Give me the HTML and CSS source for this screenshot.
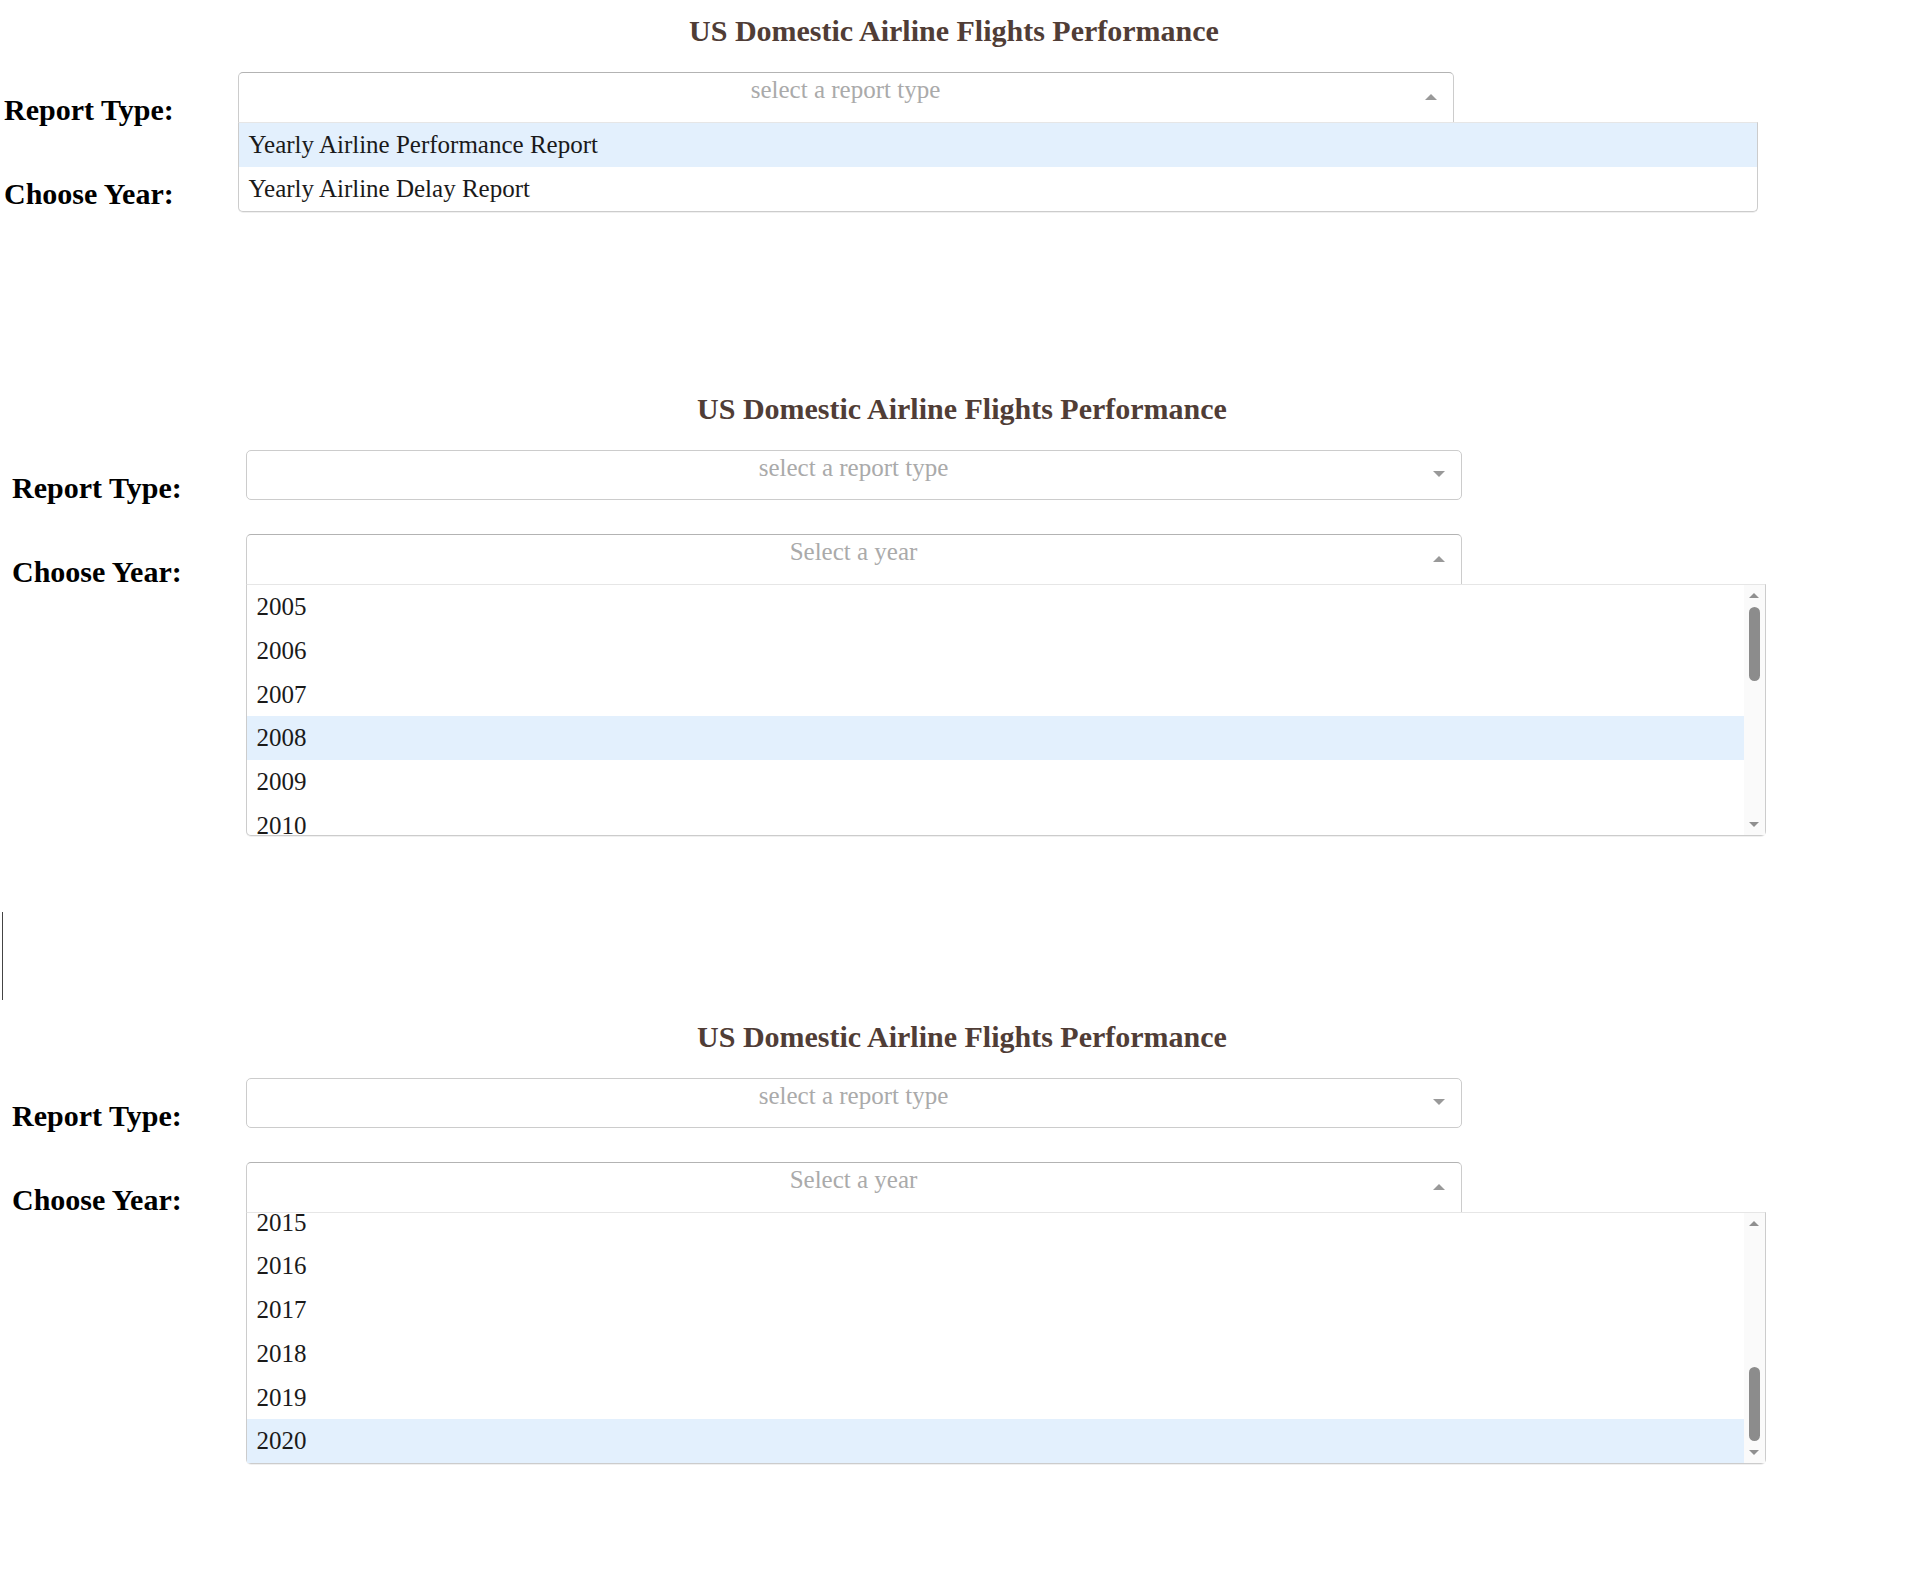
FILE: index.html
```html
<!DOCTYPE html>
<html lang="en">
<head>
<meta charset="utf-8">
<title>US Domestic Airline Flights Performance</title>
<link rel="stylesheet" href="styles.css">
</head>
<body>

<section class="panel panel-a">
  <h1 class="title">US Domestic Airline Flights Performance</h1>
  <div class="row">
    <h2 class="label">Report Type:</h2>
    <div class="dropdown">
      <div class="select">
        <div class="control open">
          <span class="placeholder">select a report type</span>
          <span class="arrow up"></span>
        </div>
        <div class="menu menu-report">
          <div class="options">
            <div class="option opt-report focused">Yearly Airline Performance Report</div>
            <div class="option opt-report">Yearly Airline Delay Report</div>
          </div>
        </div>
      </div>
    </div>
  </div>
  <div class="row">
    <h2 class="label">Choose Year:</h2>
    <div class="dropdown">
      <div class="select">
        <div class="control">
          <span class="placeholder">Select a year</span>
          <span class="arrow down"></span>
        </div>
      </div>
    </div>
  </div>
</section>

<section class="panel panel-b">
  <h1 class="title">US Domestic Airline Flights Performance</h1>
  <div class="row">
    <h2 class="label">Report Type:</h2>
    <div class="dropdown">
      <div class="select">
        <div class="control">
          <span class="placeholder">select a report type</span>
          <span class="arrow down"></span>
        </div>
      </div>
    </div>
  </div>
  <div class="row">
    <h2 class="label">Choose Year:</h2>
    <div class="dropdown">
      <div class="select">
        <div class="control open">
          <span class="placeholder">Select a year</span>
          <span class="arrow up"></span>
        </div>
        <div class="menu menu-years">
          <div class="options">
            <div class="option opt-year">2005</div>
            <div class="option opt-year">2006</div>
            <div class="option opt-year">2007</div>
            <div class="option opt-year focused">2008</div>
            <div class="option opt-year">2009</div>
            <div class="option opt-year">2010</div>
            <div class="option opt-year">2011</div>
            <div class="option opt-year">2012</div>
            <div class="option opt-year">2013</div>
            <div class="option opt-year">2014</div>
            <div class="option opt-year">2015</div>
            <div class="option opt-year">2016</div>
            <div class="option opt-year">2017</div>
            <div class="option opt-year">2018</div>
            <div class="option opt-year">2019</div>
            <div class="option opt-year">2020</div>
          </div>
          <div class="scrollbar">
            <div class="sb-btn"><span class="tri tri-up"></span></div>
            <div class="sb-track"><div class="sb-thumb"></div></div>
            <div class="sb-btn"><span class="tri tri-down"></span></div>
          </div>
        </div>
      </div>
    </div>
  </div>
</section>

<div class="caret"></div>

<section class="panel panel-c">
  <h1 class="title">US Domestic Airline Flights Performance</h1>
  <div class="row">
    <h2 class="label">Report Type:</h2>
    <div class="dropdown">
      <div class="select">
        <div class="control">
          <span class="placeholder">select a report type</span>
          <span class="arrow down"></span>
        </div>
      </div>
    </div>
  </div>
  <div class="row">
    <h2 class="label">Choose Year:</h2>
    <div class="dropdown">
      <div class="select">
        <div class="control open">
          <span class="placeholder">Select a year</span>
          <span class="arrow up"></span>
        </div>
        <div class="menu menu-years">
          <div class="options at-end">
            <div class="option opt-year">2005</div>
            <div class="option opt-year">2006</div>
            <div class="option opt-year">2007</div>
            <div class="option opt-year">2008</div>
            <div class="option opt-year">2009</div>
            <div class="option opt-year">2010</div>
            <div class="option opt-year">2011</div>
            <div class="option opt-year">2012</div>
            <div class="option opt-year">2013</div>
            <div class="option opt-year">2014</div>
            <div class="option opt-year">2015</div>
            <div class="option opt-year">2016</div>
            <div class="option opt-year">2017</div>
            <div class="option opt-year">2018</div>
            <div class="option opt-year">2019</div>
            <div class="option opt-year focused">2020</div>
          </div>
          <div class="scrollbar">
            <div class="sb-btn"><span class="tri tri-up"></span></div>
            <div class="sb-track at-end"><div class="sb-thumb"></div></div>
            <div class="sb-btn"><span class="tri tri-down"></span></div>
          </div>
        </div>
      </div>
    </div>
  </div>
</section>

</body>
</html>
```

FILE: styles.css
```css
html, body {
  margin: 0;
  padding: 0;
  background: #fff;
}

body {
  font-family: "Liberation Serif", "Times New Roman", serif;
  color: #000;
  width: 1922px;
  min-height: 1584px;
}

.panel {
  width: 1900px;
}

.panel-a {
  margin-left: 4px;
  padding-top: 14px;
}

.panel-b {
  margin-left: 12px;
  margin-top: 156px;
}

.panel-c {
  margin-left: 12px;
  margin-top: 20px;
}

.caret {
  margin: 298px 0 0 2px;
  width: 1px;
  height: 88px;
  background: #444;
}

.title {
  margin: 0 0 20px;
  font-size: 30px;
  line-height: 34px;
  font-weight: bold;
  text-align: center;
  color: #503D36;
}

.row {
  display: flex;
  align-items: flex-start;
}

.label {
  flex: 0 0 233.5px;
  margin: 25px 0;
  font-size: 30px;
  line-height: 34px;
  font-weight: bold;
  color: #000;
}

.dropdown {
  padding-top: 4px;
}

.select {
  position: relative;
  width: 1216px;
}

.control {
  box-sizing: border-box;
  height: 50px;
  border: 1px solid #ccc;
  border-radius: 5px;
  background: #fff;
  display: grid;
  grid-template-columns: 44px 1fr 44px;
  font-size: 25px;
}

.control.open {
  border-color: #b3b3b3 #ccc #ccc;
  border-bottom: 0;
  border-radius: 5px 5px 0 0;
}

.placeholder {
  grid-column: 2;
  align-self: start;
  text-align: center;
  line-height: 34px;
  color: #aaa;
  white-space: nowrap;
}

.arrow {
  grid-column: 3;
  justify-self: center;
  align-self: center;
  width: 0;
  height: 0;
  border-left: 6px solid transparent;
  border-right: 6px solid transparent;
}

.arrow.down {
  border-top: 6px solid #999;
  margin-bottom: 2px;
}

.arrow.up {
  border-bottom: 6px solid #999;
  margin-bottom: 2px;
}

.menu {
  position: absolute;
  top: 100%;
  left: 0;
  z-index: 2;
  width: 125%;
  box-sizing: border-box;
  display: flex;
  background: #fff;
  border: 1px solid #ccc;
  border-top-color: #e6e6e6;
  border-radius: 0 0 5px 5px;
  box-shadow: 0 1px 0 rgba(0, 0, 0, 0.06);
  font-size: 25px;
  color: #1a1a1a;
}

.options {
  flex: 1;
  display: flex;
  flex-direction: column;
  overflow: hidden;
}

.menu-years .options {
  height: 250px;
}

.options.at-end {
  justify-content: flex-end;
}

.option {
  flex: 0 0 43.75px;
  height: 43.75px;
  line-height: 43.75px;
  white-space: nowrap;
}

.opt-report {
  padding-left: 10px;
}

.opt-year {
  padding-left: 10px;
}

.option.focused {
  background: #e3f0fd;
}

.scrollbar {
  flex: 0 0 21px;
  display: flex;
  flex-direction: column;
  background: #fafafa;
}

.sb-btn {
  flex: 0 0 21px;
  display: flex;
  align-items: center;
  justify-content: center;
}

.tri {
  width: 0;
  height: 0;
  border-left: 5px solid transparent;
  border-right: 5px solid transparent;
}

.tri-up {
  border-bottom: 5px solid #8f8f8f;
}

.tri-down {
  border-top: 5px solid #8f8f8f;
}

.sb-track {
  flex: 1;
  display: flex;
  flex-direction: column;
}

.sb-track.at-end {
  justify-content: flex-end;
}

.sb-thumb {
  height: 74px;
  margin: 1px 5px;
  background: #8c8c8c;
  border-radius: 6px;
}
```
